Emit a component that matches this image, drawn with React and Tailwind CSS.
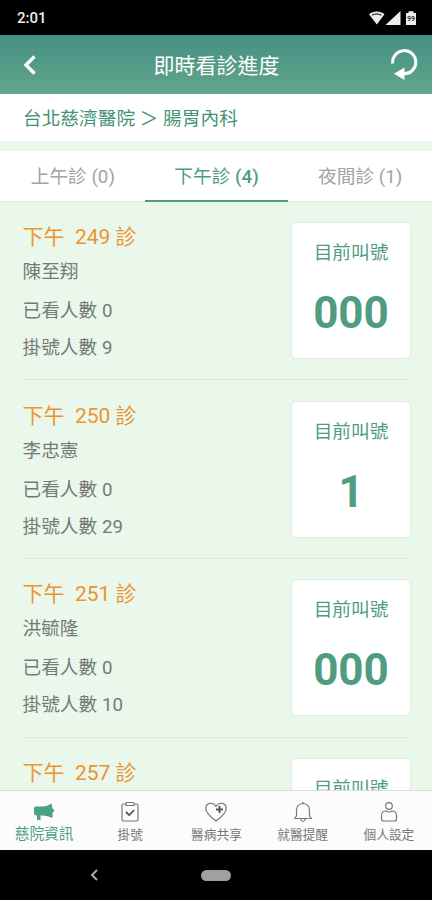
import { useState } from 'react'

const SESSIONS = [
  { label: '上午診', count: 0 },
  { label: '下午診', count: 4 },
  { label: '夜間診', count: 1 },
]

const CLINICS = [
  { room: 249, doctor: '陳至翔', seen: 0, registered: 9, current: '000' },
  { room: 250, doctor: '李忠憲', seen: 0, registered: 29, current: '1' },
  { room: 251, doctor: '洪毓隆', seen: 0, registered: 10, current: '000' },
  { room: 257 },
]

function StatusBar() {
  return (
    <div className="flex h-[35px] shrink-0 items-center justify-between bg-black pt-0.5 pr-[15px] pl-[17px] text-[#eee]">
      <span className="text-[15px] leading-none font-medium">2:01</span>
      <svg className="h-4 w-12" viewBox="0 0 48 16" fill="#eee">
        <path d="M0 3.200C4.500-.500 11-.500 15.500 3.200L7.800 13.500Z" />
        <path d="M3 4.300C6 2.500 9.500 2.500 12.500 4.300" fill="none" stroke="#222" strokeWidth="1.200" />
        <path d="M16.500 14H31.500V0Z" />
        <path d="M37 2h2.500V.200h5V2H47v12H37Z" />
        <text x="42" y="9.800" fontSize="7" fontWeight="700" textAnchor="middle" fill="#333">99</text>
      </svg>
    </div>
  )
}

function Header() {
  return (
    <header className="grid h-[59px] shrink-0 grid-cols-[72px_1fr_72px] items-center bg-linear-to-b from-[#459086] to-[#62a68a] text-white">
      <button className="pl-[23px]">
        <svg className="h-5 w-3.5" viewBox="0 0 14 20" fill="none" stroke="white" strokeWidth="3.400">
          <path d="M11.500 1.500 3 10l8.500 8.500" />
        </svg>
      </button>
      <h1 className="pt-[3px] pl-px text-center text-[21px] leading-none">即時看診進度</h1>
      <button className="flex justify-end pr-3.5">
        <svg className="h-8 w-7" viewBox="0 0 28 32" fill="none">
          <path d="M2.700 14.500A11.600 11.600 0 1 1 14 24.800" stroke="white" strokeWidth="3" />
          <path d="M4 24.800 14.500 18.500V31Z" fill="white" />
        </svg>
      </button>
    </header>
  )
}

function ClinicRow({ clinic }) {
  return (
    <div className="mr-[21px] ml-[22.500px] flex h-[178.700px] shrink-0 justify-between border-b border-[#dce9df] pt-[20.500px]">
      <div className="text-[18.700px] whitespace-pre text-[#757a76]">
        <div className="h-8 text-[21px] leading-[31px] text-[#eb952e]">下午  {clinic.room} 診</div>
        {clinic.doctor && (
          <>
            <div className="leading-[37px]">{clinic.doctor}</div>
            <div className="mt-0.5 leading-[37px]">已看人數 {clinic.seen}</div>
            <div className="leading-[37px]">掛號人數 {clinic.registered}</div>
          </>
        )}
      </div>
      <div className="flex h-[137px] w-[120px] flex-col items-center rounded-[5px] border border-[#dfece2] bg-white text-[#4f9c80]">
        <div className="mt-4 text-[18.700px] leading-7">目前叫號</div>
        {clinic.current && (
          <div className="mt-5 text-[44px] leading-[52px] font-bold">{clinic.current}</div>
        )}
      </div>
    </div>
  )
}

function NavIcon({ name }) {
  if (name === 'news') {
    return (
      <svg className="h-6 w-6" viewBox="0 0 24 24" fill="#4ca184">
        <path d="M2 8Q2 6.500 4 6.500H11Q16 6 19.500 3.500L20.500 8.500Q22.500 9 22.300 11L20.500 13V18Q15 15 9 15.500H8.500V20H5V15.500H4Q2 15 2 13Z" />
      </svg>
    )
  }
  return (
    <svg className="h-6 w-6" viewBox="0 0 24 24" fill="none" stroke="#777" strokeWidth="1.200" strokeLinejoin="round">
      {name === 'register' && (
        <>
          <path d="M8 4H5.500Q4 4 4 5.500V19.500Q4 21 5.500 21H18.500Q20 21 20 19.500V5.500Q20 4 18.500 4H16" />
          <path d="M8 5.500V3.500Q8 2.500 9 2.500H15Q16 2.500 16 3.500V5.500Z" />
          <path d="m8 12 3.200 3.200L16.200 10" stroke="#555" strokeWidth="1.800" />
        </>
      )}
      {name === 'share' && (
        <>
          <path d="M12 21C8 18 1.800 13.500 1.800 8.500C1.800 2.500 9 1.500 12 6.500C15 1.500 22.200 2.500 22.200 8.500C22.200 13.500 16 18 12 21Z" />
          <path d="M15.500 6v7M12 9.500h7" stroke="#555" strokeWidth="2" />
        </>
      )}
      {name === 'reminder' && (
        <>
          <path d="M3.500 18.500 5.500 16V10.500Q5.500 4 12 3.500Q18.500 4 18.500 10.500V16L20.500 18.500Z" />
          <path d="M9.500 19Q12 24 14.500 19M12 2v1.500" />
        </>
      )}
      {name === 'profile' && (
        <>
          <circle cx="12" cy="6" r="3.300" />
          <path d="M4.500 19V16Q4.500 11 9 11Q12 13 15 11Q19.500 11 19.500 16V19Q19.500 21 17.500 21H6.500Q4.500 21 4.500 19Z" />
        </>
      )}
    </svg>
  )
}

const NAV_ITEMS = [
  { icon: 'news', label: '慈院資訊' },
  { icon: 'register', label: '掛號' },
  { icon: 'share', label: '醫病共享' },
  { icon: 'reminder', label: '就醫提醒' },
  { icon: 'profile', label: '個人設定' },
]

export default function App() {
  const [session, setSession] = useState(1)

  return (
    <div className="flex h-[900px] w-[432px] flex-col overflow-hidden bg-[#eaf7eb] font-[Roboto,'Noto_Sans_CJK_TC',sans-serif]">
      <StatusBar />
      <Header />

      <div className="flex h-[47px] shrink-0 items-center bg-white pt-[3px] pl-[23px] text-[18.700px] leading-none text-[#3f9275]">
        台北慈濟醫院 ＞ 腸胃內科
      </div>

      <div className="mt-[10px] grid h-[50.500px] shrink-0 grid-cols-3 border-b border-[#dfe5df] bg-white pl-px">
        {SESSIONS.map((item, index) => (
          <button
            key={item.label}
            onClick={() => setSession(index)}
            className={`-mb-px border-b-2 pt-[5px] text-[18.700px] leading-none ${
              session === index ? 'border-[#4f9c80] text-[#4f9c80]' : 'border-transparent text-[#a3a3a3]'
            }`}
          >
            {item.label} <span className={session === index ? 'font-medium' : ''}>({item.count})</span>
          </button>
        ))}
      </div>

      <main className="flex min-h-0 flex-1 flex-col overflow-hidden">
        {CLINICS.map((clinic) => (
          <ClinicRow key={clinic.room} clinic={clinic} />
        ))}
      </main>

      <nav className="grid h-[60px] shrink-0 grid-cols-5 border-t border-[#d8dfd9] bg-[#fcfcfc] pl-px">
        {NAV_ITEMS.map((item, index) => (
          <button key={item.label} className="flex flex-col items-center pt-[9px]">
            <NavIcon name={item.icon} />
            <span
              className={`whitespace-nowrap ${
                index === 0 ? 'text-[14.700px] leading-5 text-[#4ca184]' : 'text-[12.700px] leading-[21px] text-[#777]'
              }`}
            >
              {item.label}
            </span>
          </button>
        ))}
      </nav>

      {/* Android system navigation */}
      <div className="grid h-[50px] shrink-0 grid-cols-[188px_56px_188px] items-center bg-black">
        <svg className="ml-[89px] h-3 w-2.5" viewBox="0 0 10 12" fill="none" stroke="#aaa" strokeWidth="2">
          <path d="M8 1 3 6l5 5" />
        </svg>
        <div className="mx-auto h-[11px] w-[30px] rounded-full bg-[#a0a0a0]" />
      </div>
    </div>
  )
}
